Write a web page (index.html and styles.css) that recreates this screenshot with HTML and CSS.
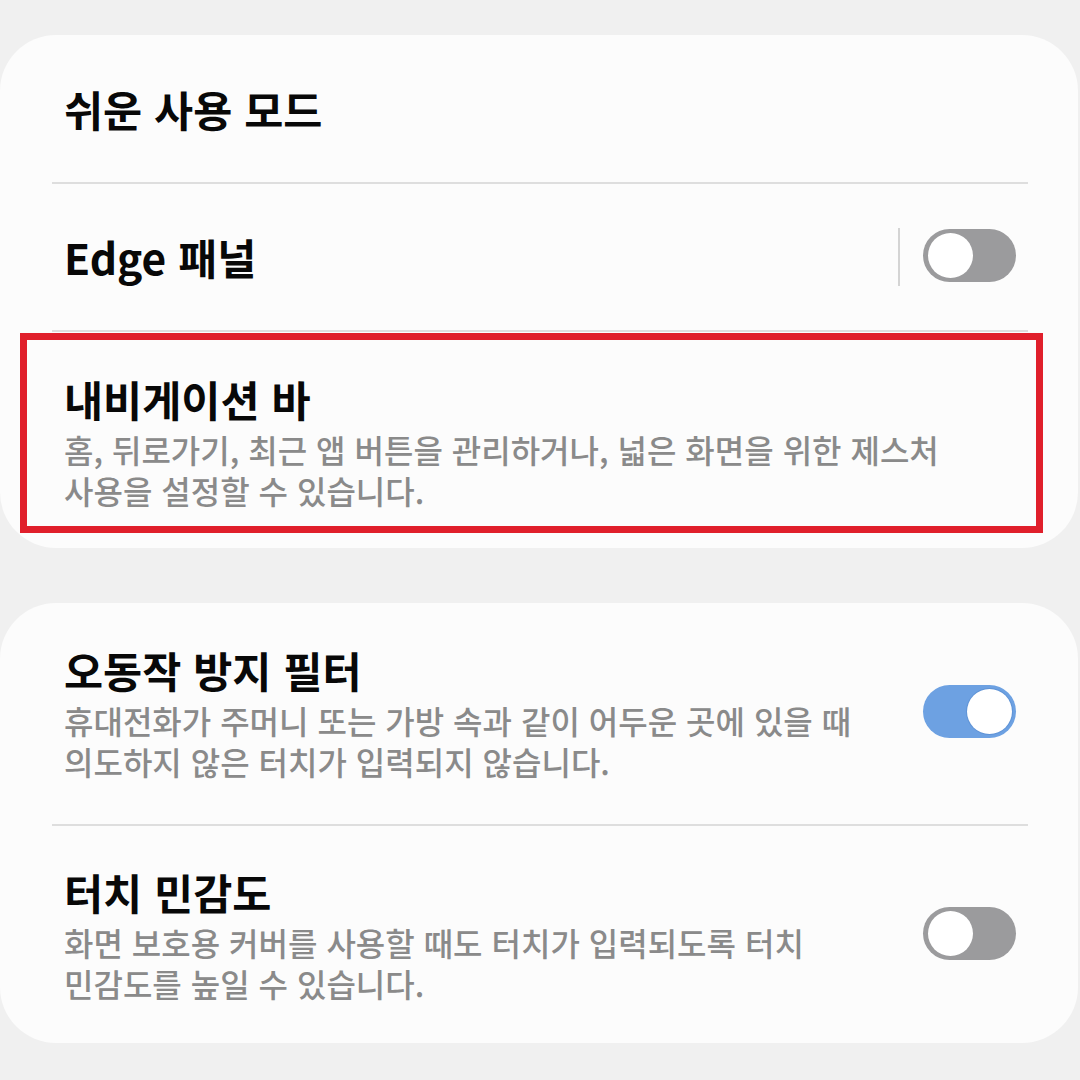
FILE: index.html
```html
<!DOCTYPE html>
<html lang="ko">
<head>
<meta charset="utf-8">
<title>설정</title>
<link rel="stylesheet" href="styles.css">
</head>
<body>
<main class="page">
  <section class="card card-top">
    <div class="row row-single row-first">
      <div class="text"><div class="title">쉬운 사용 모드</div></div>
    </div>
    <div class="sep"></div>
    <div class="row row-single row-second">
      <div class="text"><div class="title">Edge 패널</div></div>
      <div class="control">
        <span class="vdivider"></span>
        <span class="toggle off"><span class="thumb"></span></span>
      </div>
    </div>
    <div class="sep"></div>
    <div class="row row-multi row-nav">
      <div class="text">
        <div class="title">내비게이션 바</div>
        <div class="desc">홈, 뒤로가기, 최근 앱 버튼을 관리하거나, 넓은 화면을 위한 제스처 사용을 설정할 수 있습니다.</div>
      </div>
      <div class="highlight"></div>
    </div>
  </section>

  <section class="card card-bottom">
    <div class="row row-multi row-a">
      <div class="text narrow">
        <div class="title">오동작 방지 필터</div>
        <div class="desc">휴대전화가 주머니 또는 가방 속과 같이 어두운 곳에 있을 때 의도하지 않은 터치가 입력되지 않습니다.</div>
      </div>
      <div class="control">
        <span class="toggle on"><span class="thumb"></span></span>
      </div>
    </div>
    <div class="sep"></div>
    <div class="row row-multi row-b">
      <div class="text narrow">
        <div class="title">터치 민감도</div>
        <div class="desc">화면 보호용 커버를 사용할 때도 터치가 입력되도록 터치 민감도를 높일 수 있습니다.</div>
      </div>
      <div class="control">
        <span class="toggle off"><span class="thumb"></span></span>
      </div>
    </div>
  </section>
</main>
</body>
</html>
```

FILE: styles.css
```css
* { box-sizing: border-box; }

html, body {
  margin: 0;
  padding: 0;
  background: #f0f0f0;
  width: 1080px;
  height: 1080px;
  overflow: hidden;
}

body {
  font-family: "Noto Sans CJK KR", "Noto Sans", sans-serif;
  color: #0a0a0a;
}

.page {
  display: flex;
  flex-direction: column;
  gap: 55px;
  padding: 35px 2px 0 0;
}

.card {
  background: #fcfcfc;
  border-radius: 56px;
  display: flex;
  flex-direction: column;
}

.sep {
  height: 2px;
  background: #dedede;
  margin: 0 50px 0 52px;
}

.row {
  position: relative;
  display: flex;
  align-items: center;
  padding: 0 62px 0 64px;
}

.row-first { padding-top: 48px; padding-bottom: 47px; }
.row-second { padding-top: 44px; padding-bottom: 44px; }
.row-nav { padding-top: 41px; padding-bottom: 37px; }
.row-a { padding-top: 41px; padding-bottom: 42px; }
.row-b { padding-top: 40px; padding-bottom: 39px; }

.text {
  flex: 1;
  min-width: 0;
}

.text.narrow {
  flex: 0 0 815px;
}

.title {
  font-size: 42.5px;
  line-height: 52px;
  font-weight: 700;
  color: #080808;
}

.desc {
  margin-top: 4px;
  font-size: 32px;
  line-height: 41px;
  font-weight: 500;
  color: #8a8a8a;
  word-break: keep-all;
}

.row-nav .desc {
  padding-right: 50px;
}

.control {
  margin-left: auto;
  display: flex;
  align-items: center;
  gap: 23px;
}

.vdivider {
  width: 2px;
  height: 58px;
  background: #d4d4d4;
}

.toggle {
  position: relative;
  display: block;
  width: 93px;
  height: 53px;
  border-radius: 27px;
  margin-top: -3px;
}

.toggle.off { background: #9b9b9d; }
.toggle.on { background: #6da1e2; }

.toggle .thumb {
  position: absolute;
  top: 4px;
  width: 45px;
  height: 45px;
  border-radius: 50%;
  background: #ffffff;
}

.toggle.off .thumb { left: 5px; }
.toggle.on .thumb { right: 4px; box-shadow: 0 0 0 1px #5f93d6; }

.highlight {
  position: absolute;
  left: 20px;
  right: 35px;
  top: 1px;
  bottom: 15px;
  border: 7px solid #e01f2b;
  pointer-events: none;
}
```
